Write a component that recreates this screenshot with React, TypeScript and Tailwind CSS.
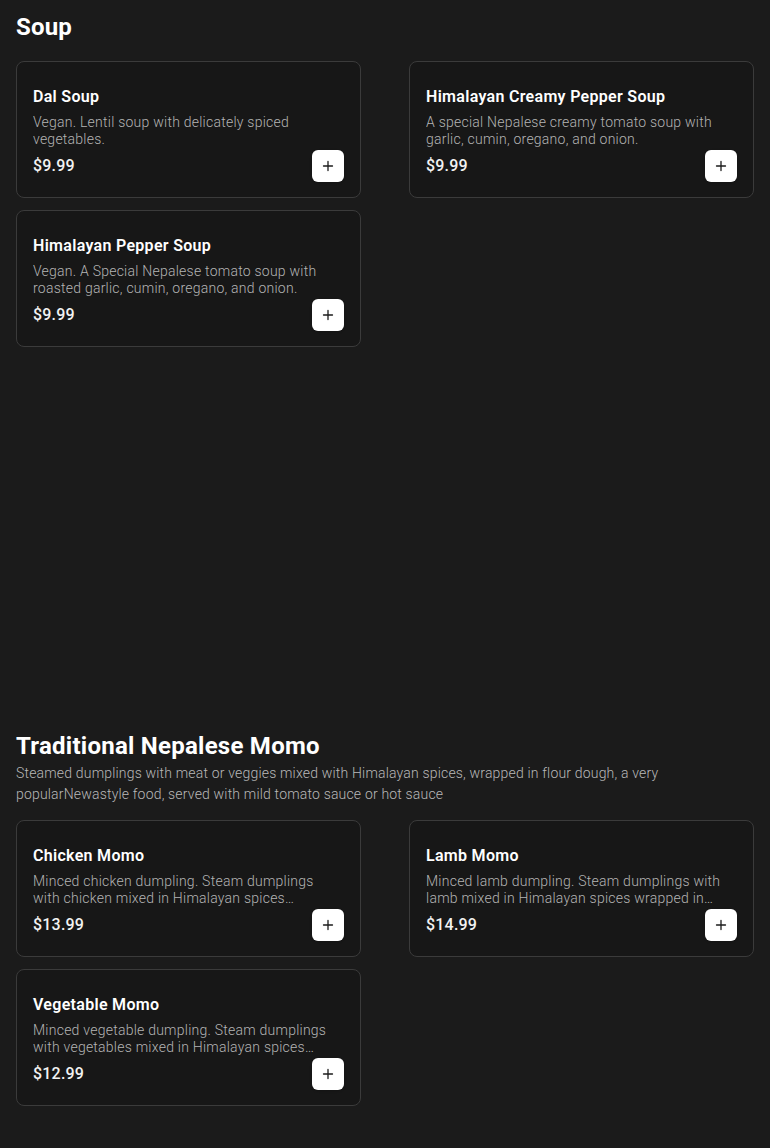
import React from "react";

type Item = { name: string; desc: string; price: string };

const soups: Item[] = [
  { name: "Dal Soup", desc: "Vegan. Lentil soup with delicately spiced vegetables.", price: "$9.99" },
  { name: "Himalayan Creamy Pepper Soup", desc: "A special Nepalese creamy tomato soup with garlic, cumin, oregano, and onion.", price: "$9.99" },
  { name: "Himalayan Pepper Soup", desc: "Vegan. A Special Nepalese tomato soup with roasted garlic, cumin, oregano, and onion.", price: "$9.99" },
];

const momos: Item[] = [
  { name: "Chicken Momo", desc: "Minced chicken dumpling. Steam dumplings with chicken mixed in Himalayan spices\u2026", price: "$13.99" },
  { name: "Lamb Momo", desc: "Minced lamb dumpling. Steam dumplings with lamb mixed in Himalayan spices wrapped in\u2026", price: "$14.99" },
  { name: "Vegetable Momo", desc: "Minced vegetable dumpling. Steam dumplings with vegetables mixed in Himalayan spices\u2026", price: "$12.99" },
];

function PlusIcon() {
  return (
    <svg width="12" height="12" viewBox="0 0 12 12" fill="none">
      <path d="M6 1.5V10.5M1.5 6H10.5" stroke="#1b1b1b" strokeWidth="1.3" strokeLinecap="round" />
    </svg>
  );
}

function Card({ item }: { item: Item }) {
  return (
    <div className="rounded-lg border border-[#3b3b3b] bg-[#171717] pt-[23px] px-4 pb-[15px] flex flex-col">
      <div className="text-base leading-6 font-semibold text-white tracking-[0.3px]">{item.name}</div>
      <p className="mt-[5px] text-sm leading-[17px] font-light tracking-[0.24px] text-[#b4b4b4] h-[34px] overflow-hidden">
        {item.desc}
      </p>
      <div className="mt-[2px] flex items-center justify-between">
        <span className="text-base font-medium tracking-[0.2px] text-[#f2f2f2]">{item.price}</span>
        <button className="w-8 h-8 rounded-md bg-white flex items-center justify-center shadow-sm">
          <PlusIcon />
        </button>
      </div>
    </div>
  );
}

export default function App() {
  return (
    <div
      className="min-h-[1148px] bg-[#1b1b1b] px-4 pb-10"
      style={{ fontFamily: "Roboto, 'Noto Sans', sans-serif" }}
    >
      <section className="pt-[11px]">
        <h2 className="text-2xl leading-8 font-bold tracking-[0.2px] text-white">Soup</h2>
        <div className="mt-[18px] grid grid-cols-2 gap-x-12 gap-y-3">
          {soups.map((s) => (
            <Card key={s.name} item={s} />
          ))}
        </div>
      </section>
      <section className="mt-[383px]">
        <h2 className="text-2xl leading-8 font-bold tracking-[0.25px] text-white">Traditional Nepalese Momo</h2>
        <p className="mt-px text-sm leading-[21px] font-light tracking-[0.18px] text-[#b8b8b8] pr-16">
          Steamed dumplings with meat or veggies mixed with Himalayan spices, wrapped in flour dough, a very popularNewastyle food, served with mild tomato sauce or hot sauce
        </p>
        <div className="mt-[15px] grid grid-cols-2 gap-x-12 gap-y-3">
          {momos.map((s) => (
            <Card key={s.name} item={s} />
          ))}
        </div>
      </section>
    </div>
  );
}
